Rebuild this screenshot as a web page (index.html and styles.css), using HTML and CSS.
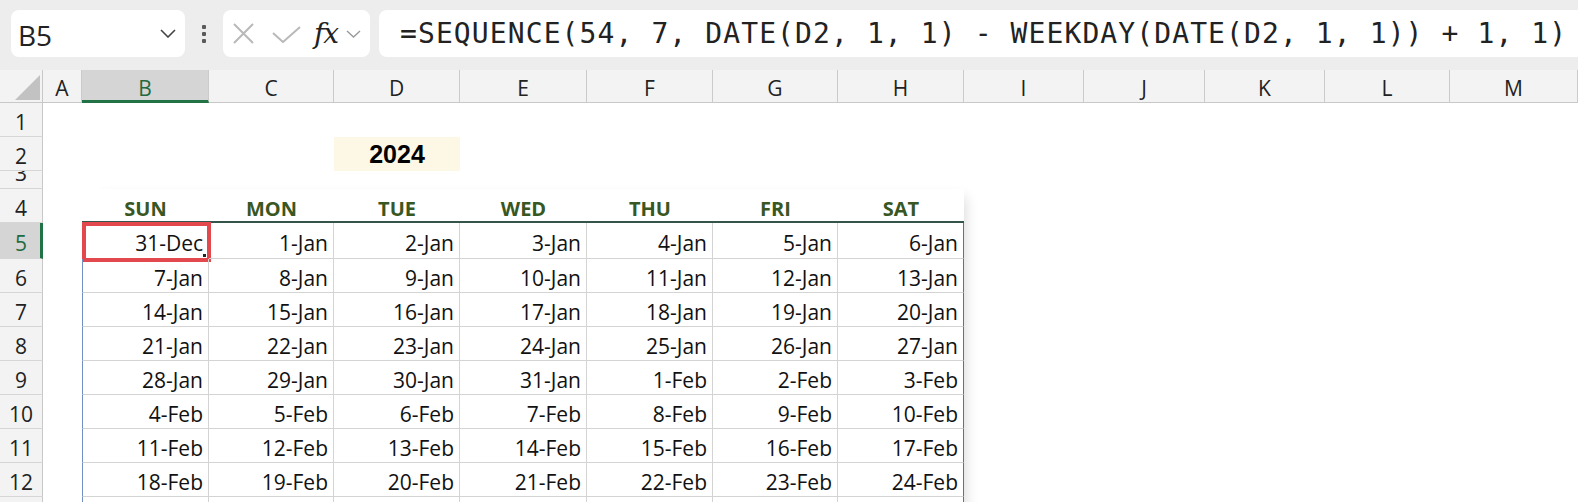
FILE: index.html
```html
<!DOCTYPE html>
<html>
<head>
<meta charset="utf-8">
<link rel="stylesheet" href="styles.css">
</head>
<body>
<div class="toolbar">
  <div class="namebox">
    <span>B5</span>
    <svg class="nb-chev" width="16" height="9" viewBox="0 0 16 9"><polyline points="1,1 8,8 15,1" fill="none" stroke="#444" stroke-width="1.6"/></svg>
  </div>
  <div class="dots"><i></i><i></i><i></i></div>
  <div class="fxbox">
    <svg class="ic-x" width="21" height="21" viewBox="0 0 21 21"><path d="M1 1 L20 20 M20 1 L1 20" stroke="#b9b9b9" stroke-width="2" fill="none"/></svg>
    <svg class="ic-check" width="29" height="17" viewBox="0 0 29 17"><polyline points="1,7 11,16 28,1" fill="none" stroke="#b9b9b9" stroke-width="2"/></svg>
    <span class="fx">fx</span>
    <svg class="ic-chev" width="15" height="8" viewBox="0 0 15 8"><polyline points="1,1 7.5,7 14,1" fill="none" stroke="#9a9a9a" stroke-width="1.4"/></svg>
  </div>
  <div class="formula">=SEQUENCE(54, 7, DATE(D2, 1, 1) - WEEKDAY(DATE(D2, 1, 1)) + 1, 1)</div>
</div>

<div class="sheet">
  <div class="corner"><svg width="43" height="33" viewBox="0 0 43 33"><polygon points="15,30 40,5 40,30" fill="#c2c2c2"/></svg></div>
  <div class="ch">A</div>
  <div class="ch active">B</div>
  <div class="ch">C</div>
  <div class="ch">D</div>
  <div class="ch">E</div>
  <div class="ch">F</div>
  <div class="ch">G</div>
  <div class="ch">H</div>
  <div class="ch">I</div>
  <div class="ch">J</div>
  <div class="ch">K</div>
  <div class="ch">L</div>
  <div class="ch">M</div>

  <div class="rh">1</div>
  <div class="rh">2</div>
  <div class="rh short"><span>3</span></div>
  <div class="rh">4</div>
  <div class="rh active">5</div>
  <div class="rh">6</div>
  <div class="rh">7</div>
  <div class="rh">8</div>
  <div class="rh">9</div>
  <div class="rh">10</div>
  <div class="rh">11</div>
  <div class="rh">12</div>
  <div class="rh"></div>

  <div class="year">2024</div>

  <div class="table">
    <div class="day">SUN</div><div class="day">MON</div><div class="day">TUE</div><div class="day">WED</div><div class="day">THU</div><div class="day">FRI</div><div class="day">SAT</div>

    <div class="d first sel">31-Dec<span class="selbox"></span><span class="handle"></span></div><div class="d">1-Jan</div><div class="d">2-Jan</div><div class="d">3-Jan</div><div class="d">4-Jan</div><div class="d">5-Jan</div><div class="d last">6-Jan</div>
    <div class="d first">7-Jan</div><div class="d">8-Jan</div><div class="d">9-Jan</div><div class="d">10-Jan</div><div class="d">11-Jan</div><div class="d">12-Jan</div><div class="d last">13-Jan</div>
    <div class="d first">14-Jan</div><div class="d">15-Jan</div><div class="d">16-Jan</div><div class="d">17-Jan</div><div class="d">18-Jan</div><div class="d">19-Jan</div><div class="d last">20-Jan</div>
    <div class="d first">21-Jan</div><div class="d">22-Jan</div><div class="d">23-Jan</div><div class="d">24-Jan</div><div class="d">25-Jan</div><div class="d">26-Jan</div><div class="d last">27-Jan</div>
    <div class="d first">28-Jan</div><div class="d">29-Jan</div><div class="d">30-Jan</div><div class="d">31-Jan</div><div class="d">1-Feb</div><div class="d">2-Feb</div><div class="d last">3-Feb</div>
    <div class="d first">4-Feb</div><div class="d">5-Feb</div><div class="d">6-Feb</div><div class="d">7-Feb</div><div class="d">8-Feb</div><div class="d">9-Feb</div><div class="d last">10-Feb</div>
    <div class="d first">11-Feb</div><div class="d">12-Feb</div><div class="d">13-Feb</div><div class="d">14-Feb</div><div class="d">15-Feb</div><div class="d">16-Feb</div><div class="d last">17-Feb</div>
    <div class="d first">18-Feb</div><div class="d">19-Feb</div><div class="d">20-Feb</div><div class="d">21-Feb</div><div class="d">22-Feb</div><div class="d">23-Feb</div><div class="d last">24-Feb</div>
    <div class="d first"></div><div class="d"></div><div class="d"></div><div class="d"></div><div class="d"></div><div class="d"></div><div class="d last"></div>
  </div>
</div>
</body>
</html>
```

FILE: styles.css
```css
html, body {
  margin: 0;
  padding: 0;
}
body {
  width: 1578px;
  height: 502px;
  overflow: hidden;
  background: #ffffff;
  font-family: "Open Sans", "Noto Sans", sans-serif;
  color: #1a1a1a;
}

/* ---------- toolbar ---------- */
.toolbar {
  display: flex;
  align-items: flex-start;
  height: 70px;
  box-sizing: border-box;
  padding: 10px 0 0 11px;
  background: #ededed;
}
.namebox {
  width: 174px;
  height: 47px;
  box-sizing: border-box;
  background: #fff;
  border-radius: 8px;
  display: flex;
  align-items: center;
  justify-content: space-between;
  padding: 0 9px 0 7px;
  font-size: 28px;
  color: #222;
}
.namebox span {
  padding-top: 2px;
}
.dots {
  width: 38px;
  height: 47px;
  display: flex;
  flex-direction: column;
  align-items: center;
  justify-content: center;
  gap: 3px;
}
.dots i {
  display: block;
  width: 4px;
  height: 4px;
  border-radius: 1px;
  background: #5a5a5a;
}
.fxbox {
  width: 147px;
  height: 47px;
  box-sizing: border-box;
  background: #fff;
  border-radius: 8px;
  display: flex;
  align-items: center;
  padding-left: 10px;
}
.ic-x {
  margin-right: 18px;
}
.ic-check {
  margin-right: 13px;
  margin-top: 1px;
}
.fx {
  font-family: "DejaVu Serif", "Liberation Serif", serif;
  font-style: italic;
  font-size: 28px;
  color: #222;
  margin-right: 8px;
  line-height: 1;
  letter-spacing: -1px;
}
.formula {
  flex: 1;
  margin-left: 9px;
  height: 47px;
  box-sizing: border-box;
  background: #fff;
  border-radius: 8px 0 0 8px;
  padding-left: 21px;
  display: flex;
  align-items: center;
  white-space: nowrap;
  overflow: hidden;
  font-family: "DejaVu Sans Mono", "Liberation Mono", monospace;
  font-size: 28px;
  letter-spacing: 1.1px;
  color: #222;
}

/* ---------- sheet ---------- */
.sheet {
  display: grid;
  grid-template-columns: 43px 39px 127px 125px 126px 127px 126px 125px 126px 120px 121px 120px 125px 1fr;
  grid-template-rows: 33px 34px 34px 18px 34px 36px repeat(8, 34px);
}
.corner {
  background: #f3f3f3;
  border-right: 1px solid #c8c8c8;
  border-bottom: 1px solid #c8c8c8;
  box-sizing: border-box;
  overflow: hidden;
}
.corner svg {
  display: block;
}
.ch {
  background: #f3f3f3;
  border-right: 1px solid #cbcbcb;
  border-bottom: 1px solid #c8c8c8;
  box-sizing: border-box;
  display: flex;
  align-items: center;
  justify-content: center;
  padding-top: 4px;
  font-size: 21px;
  color: #222;
}
.ch.active {
  background: #d5d5d5;
  color: #1f6b40;
  border-bottom: 3px solid #217346;
  padding-top: 6px;
}
.rh {
  grid-column: 1;
  background: #f3f3f3;
  border-right: 1px solid #c8c8c8;
  border-bottom: 1px solid #d6d6d6;
  box-sizing: border-box;
  display: flex;
  align-items: center;
  justify-content: center;
  padding-top: 4px;
  font-size: 21px;
  color: #222;
  overflow: hidden;
}
.rh.short {
  align-items: flex-start;
  padding-top: 0;
}
.rh.short span {
  line-height: 21px;
  margin-top: -8px;
}
.rh.active {
  background: #d5d5d5;
  color: #1f6b40;
  border-right: 3px solid #217346;
  padding-left: 2px;
}

.year {
  grid-column: 5;
  grid-row: 3;
  background: #fdf8e6;
  display: flex;
  align-items: center;
  justify-content: center;
  font-family: "Liberation Sans", Arial, sans-serif;
  font-weight: 700;
  font-size: 25px;
  color: #000;
}

.table {
  grid-column: 3 / 10;
  grid-row: 5 / 15;
  display: grid;
  grid-template-columns: 127px 125px 126px 127px 126px 125px 126px;
  grid-template-rows: 34px 36px repeat(8, 34px);
  box-shadow: 10px 0 12px -8px rgba(0, 0, 0, 0.14);
  background: #fff;
}
.day {
  display: flex;
  align-items: center;
  justify-content: center;
  box-sizing: border-box;
  padding-top: 6px;
  border-bottom: 2px solid #34564a;
  font-weight: 700;
  font-size: 20px;
  color: #385723;
}
.d {
  position: relative;
  display: flex;
  align-items: center;
  justify-content: flex-end;
  box-sizing: border-box;
  padding: 4px 5px 0 0;
  border-right: 1px solid #d4d4d4;
  border-bottom: 1px solid #d4d4d4;
  font-size: 21px;
  color: #111;
}
.d.first {
  border-left: 1px solid #7290c4;
}
.d.last {
  border-right: 1px solid #4a72bd;
}
.selbox {
  position: absolute;
  left: -1px;
  top: -1px;
  right: -3px;
  bottom: -4px;
  border: 4px solid #e2484d;
}
.handle {
  position: absolute;
  right: 2px;
  bottom: 1px;
  width: 3px;
  height: 3px;
  background: #222;
}
```
